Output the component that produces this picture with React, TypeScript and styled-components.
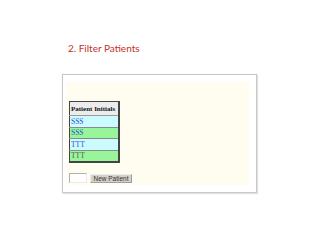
import React from "react";
import styled, { createGlobalStyle } from "styled-components";

const Global = createGlobalStyle`
  html, body { margin: 0; padding: 0; background: #ffffff; }
  body { width: 320px; height: 240px; overflow: hidden; }
`;

const Slide = styled.div`
  width: 320px;
  height: 240px;
  box-sizing: border-box;
  padding: 40px 0 0 62px;
  display: flex;
  flex-direction: column;
`;

const Title = styled.h1`
  margin: 0 0 0 6px;
  font-family: "Lato", "Open Sans", sans-serif;
  font-weight: 400;
  font-size: 10px;
  line-height: 16px;
  color: #c8302a;
`;

const Frame = styled.div`
  margin-top: 18px;
  width: 195px;
  height: 119px;
  box-sizing: border-box;
  border: 1px solid #c9c9c9;
  box-shadow: 0 0 1px #d8d8d8, 1px 1px 1px #e2e2e2;
  background: #ffffff;
  padding: 7px 7px 7px 3px;
  display: flex;
`;

const Canvas = styled.div`
  flex: 1;
  background: #fffcf0;
  padding: 19px 0 0 3px;
  display: flex;
  flex-direction: column;
  align-items: flex-start;
`;

const Table = styled.table`
  border-collapse: collapse;
  border: 1px solid #444;
  border-right-width: 2px;
  border-bottom-width: 2px;
  font-family: "Liberation Serif", "Times New Roman", serif;
  font-size: 7.5px;
  width: 51px;
`;

const HeadCell = styled.th`
  background: #ececec;
  color: #111;
  font-weight: 700;
  font-size: 7px;
  text-align: left;
  height: 13px;
  padding: 0 1px;
  white-space: nowrap;
  border-bottom: 1px solid #9a9a9a;
`;

const Cell = styled.td<{ $bg: string; $fg: string }>`
  background: ${(p) => p.$bg};
  color: ${(p) => p.$fg};
  height: 10.5px;
  padding: 0 1px;
  text-align: left;
  border-bottom: 1px solid #8a8a8a;
`;

const Controls = styled.div`
  margin-top: 10px;
  display: flex;
  align-items: flex-end;
  gap: 3px;
`;

const Input = styled.input`
  width: 18px;
  height: 10px;
  box-sizing: border-box;
  margin: 0;
  padding: 0;
  border: 1px solid #b0b0b0;
  border-right-color: #e8e8e8;
  border-bottom-color: #e8e8e8;
  background: #fff;
`;

const Button = styled.button`
  height: 9px;
  width: 42px;
  box-sizing: border-box;
  margin: 0;
  padding: 0;
  background: #d4d1c9;
  border: 1px solid #a0a0a0;
  border-top-color: #eeeeee;
  border-left-color: #eeeeee;
  font-family: "Liberation Sans", Arial, sans-serif;
  font-size: 6.5px;
  line-height: 7px;
  color: #333;
`;

const rows = [
  { name: "SSS", bg: "#ccfbff", fg: "#2d4fd6" },
  { name: "SSS", bg: "#99f59a", fg: "#2d4fd6" },
  { name: "TTT", bg: "#ccfbff", fg: "#2d4fd6" },
  { name: "TTT", bg: "#99f59a", fg: "#555" },
];

export default function App() {
  return (
    <>
      <Global />
      <Slide>
        <Title>2. Filter Patients</Title>
        <Frame>
          <Canvas>
            <Table>
              <thead>
                <tr>
                  <HeadCell>Patient Initials</HeadCell>
                </tr>
              </thead>
              <tbody>
                {rows.map((r, i) => (
                  <tr key={i}>
                    <Cell $bg={r.bg} $fg={r.fg}>
                      {r.name}
                    </Cell>
                  </tr>
                ))}
              </tbody>
            </Table>
            <Controls>
              <Input type="text" />
              <Button>New Patient</Button>
            </Controls>
          </Canvas>
        </Frame>
      </Slide>
    </>
  );
}
